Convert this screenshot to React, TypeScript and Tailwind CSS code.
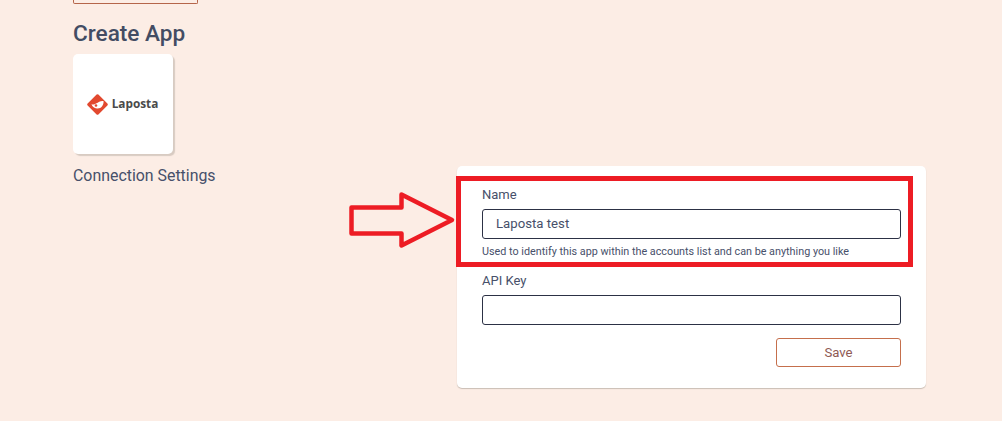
export default function App() {
  return (
    <div className="relative h-[421px] w-[1002px] overflow-hidden bg-[#fcede5] pl-[73px] font-['Roboto',sans-serif] text-[#47506a]">
      <div className="h-[4px] w-[125px] rounded-b-[2px] border-x border-b border-[#b5654a] bg-[#fcede5]" />
      <h1 className="mt-[16px] h-[28px] text-[22.6px] font-medium leading-[28px] text-[#434c63]">Create App</h1>
      <div className="mt-[6px] flex h-[100px] w-[100px] items-center justify-center rounded-[5px] bg-white shadow-[2px_2px_1px_#d8cbc2]">
        <svg width="21" height="21" viewBox="0 0 21 21" className="-ml-px shrink-0">
          <path d="M10.5 1.5 L19.5 10.5 L10.5 19.5 L1.5 10.5 Z" fill="#e2492f" stroke="#e2492f" strokeWidth="2.5" strokeLinejoin="round" />
          <path d="M4.5 10 C6 11 7.5 10.5 9 9.5 C11.5 8 14 6.5 16.5 7 C17 11 14 15 10 14.5 C7 14.2 5 12.5 4.5 10 Z" fill="#fff" />
          <circle cx="9" cy="11.5" r="1.3" fill="#e2492f" />
        </svg>
        <span className="ml-[4px] font-['Open_Sans',sans-serif] text-[11.8px] font-bold leading-none text-[#4a4a4a]">Laposta</span>
      </div>
      <div className="mt-[12px] grid grid-cols-[384px_469px] items-start">
        <p className="text-[15.9px] leading-[19px]">Connection Settings</p>
        <div className="flex h-[222px] flex-col rounded-[5px] bg-white px-[25px] pt-[21px] shadow-[0_1px_1px_#c9bdb4]">
          <label className="h-[16px] text-[13px] leading-[16px]">Name</label>
          <div className="mt-[6px] flex h-[30px] items-center rounded-[3px] border border-[#2c3145] px-[13px] text-[13.2px]">Laposta test</div>
          <p className="mt-[6px] h-[13px] text-[10.8px] leading-[13px]">Used to identify this app within the accounts list and can be anything you like</p>
          <label className="mt-[15px] h-[16px] text-[13px] leading-[16px]">API Key</label>
          <div className="mt-[6px] h-[30px] rounded-[3px] border border-[#2c3145]" />
          <button className="mt-[13px] h-[29px] w-[125px] self-end rounded-[3px] border border-[#c56f4c] text-[13.2px] text-[#8f5a55]">Save</button>
        </div>
      </div>
      <div className="absolute left-[456px] top-[176px] h-[91px] w-[457px] border-[5px] border-[#ed1c24]" />
      <svg className="absolute left-[347px] top-[190px]" width="112" height="60" viewBox="0 0 112 60">
        <path d="M4.5 17.5 H54.5 V4.5 L105 30 L54.5 55.5 V43.5 H4.5 Z" fill="none" stroke="#ed1c24" strokeWidth="4.5" strokeLinejoin="round" />
      </svg>
    </div>
  );
}
